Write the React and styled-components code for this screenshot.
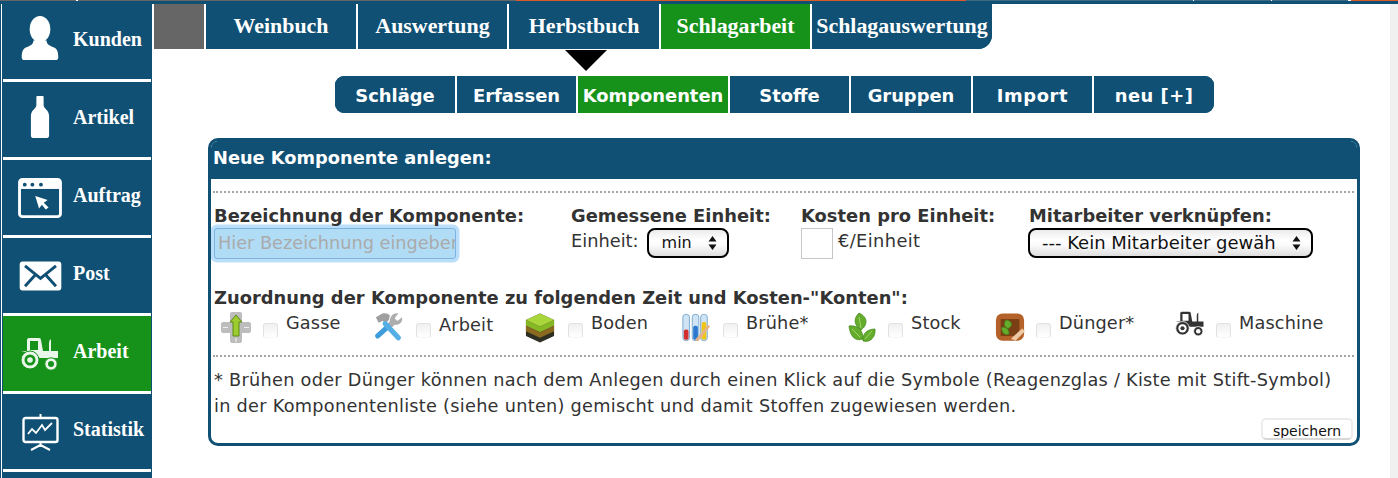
import React from "react";
import styled, { createGlobalStyle } from "styled-components";

const BLUE = "#0f5074";
const GREEN = "#16921a";

const Global = createGlobalStyle`
  html, body { margin: 0; padding: 0; background: #fff; height: 478px; overflow: hidden; }
  #root { height: 478px; }
  * { box-sizing: border-box; }
`;

const Page = styled.div`
  width: 1398px; height: 478px; display: flex; flex-direction: column; overflow: hidden; background: #fff;
`;
const TopStrip = styled.div`
  height: 4px; flex: none; display: flex; background: ${BLUE}; align-items: flex-start;
`;
const StripPart = styled.div`
  height: 1px; width: ${p => p.$w}px; flex: ${p => (p.$grow ? 1 : "none")}; background: ${p => p.$c};
`;
const Body = styled.div`
  flex: 1; display: flex; min-height: 0; border-left: 1px solid ${BLUE}; border-right: 8px solid #f0f0f0;
`;
const Sidebar = styled.nav`
  width: 150px; flex: none; margin-left: 1px; background: ${BLUE};
  display: flex; flex-direction: column; padding: 0 1px; height: 474px; overflow: hidden;
`;
const SideItem = styled.div`
  height: 78px; flex: none; display: flex; align-items: center; background: ${p => (p.$active ? GREEN : "transparent")};
  border-bottom: 3px solid #fff; color: #fff;
  font: bold 20px "Liberation Serif", serif;
`;
const SideIcon = styled.div`
  width: 70px; flex: none; display: flex; justify-content: center; align-items: center; padding-left: 4px;
  transform: translateY(${p => p.$dy || 0}px);
`;
const SideLabel = styled.span`
  transform: translateY(-2px);
`;
const Main = styled.div`
  flex: 1; min-width: 0; display: flex; flex-direction: column;
`;
const TopTabs = styled.div`
  display: flex; height: 45px; align-self: flex-start; margin-left: 2px;
  background: ${BLUE}; border-bottom-right-radius: 14px; overflow: hidden;
`;
const TopTab = styled.div`
  width: ${p => p.$w}px; height: 45px; flex: none; display: flex; align-items: center; justify-content: center;
  background: ${p => (p.$gray ? "#666" : p.$active ? GREEN : BLUE)};
  border-right: ${p => (p.$last ? "0" : "2px solid #fff")};
  color: #fff; font: bold 21.9px "Liberation Serif", serif; white-space: nowrap; padding-bottom: 2px;
`;
const Arrow = styled.div`
  height: 21px; flex: none; padding-left: 413px; padding-top: 1px;
`;
const ArrowShape = styled.div`
  width: 0; height: 0; border-left: 21.5px solid transparent; border-right: 21.5px solid transparent; border-top: 21px solid #000;
`;
const SubTabs = styled.div`
  display: flex; height: 37px; flex: none; margin: 6px 0 0 183px; align-self: flex-start; background: ${BLUE}; border-radius: 9px; overflow: hidden;
`;
const SubTab = styled.div`
  width: ${p => p.$w}px; flex: none; display: flex; align-items: center; justify-content: center;
  background: ${p => (p.$active ? GREEN : BLUE)}; border-right: ${p => (p.$last ? "0" : "2px solid #fff")};
  color: #fff; font: bold 17.9px "DejaVu Sans", sans-serif; letter-spacing: ${p => p.$ls || 0}px; white-space: nowrap; padding-top: 1px;
`;
const Card = styled.section`
  width: 1152px; height: 308px; flex: none; margin: 25px 0 0 56px; border: 3px solid ${BLUE}; border-radius: 10px; overflow: hidden; color: #333;
`;
const CardHead = styled.h2`
  margin: 0; height: 38px; background: ${BLUE}; color: #fff; font: bold 17.8px "DejaVu Sans", sans-serif; padding: 6px 0 0 2px; white-space: nowrap;
`;
const Dots = styled.div`
  border-top: 2px dotted #a5a5a5; margin: ${p => p.$m};
  height: 0;
`;
const FieldRow = styled.div`
  display: flex; height: 86px;
`;
const Field = styled.div`
  width: ${p => p.$w}px; flex: none; padding-left: 3px;
`;
const FieldTitle = styled.div`
  font: bold 17.85px/20px "DejaVu Sans", sans-serif; color: #333; white-space: nowrap; letter-spacing: .03px;
  margin-top: ${p => p.$mt || 0}px;
`;
const NameInput = styled.div`
  width: 242px; height: 31px; background: #b1dcf5; border: 1px solid #7eb2df; color: #aaa; margin-top: 2px;
  box-shadow: 0 0 0 3.5px #bbdffa; border-radius: 3px; font: 17.7px/29px "DejaVu Sans", sans-serif; padding-left: 3px; overflow: hidden; white-space: nowrap;
`;
const UnitLine = styled.div`
  display: flex; align-items: flex-start; margin-top: 2px; font: 17.8px/26px "DejaVu Sans", sans-serif; letter-spacing: ${p => p.$ls || 0}px; color: #333;
`;
const FakeSelect = styled.div`
  position: relative; width: ${p => p.$w}px; height: 30px; border: 2px solid #000; border-radius: 8px; color: #111; margin: ${p => p.$m || 0};
  background: linear-gradient(#ececec, #fff 40%, #fafafa 60%, #dedede); letter-spacing: 0;
  font: ${p => p.$fs}px/25px "DejaVu Sans", sans-serif; padding-left: ${p => p.$pl}px; white-space: nowrap; overflow: hidden;
`;
const Updown = styled.svg`
  position: absolute; right: 10px; top: 6px; width: 9px; height: 14px;
`;
const CostBox = styled.div`
  width: 32px; height: 31px; border: 1px solid #c6c6c6; flex: none; margin-right: 5px; background: #fff;
`;
const Accounts = styled.div`
  display: flex; height: 44px; margin-top: 3px; padding-left: 10px;
`;
const Account = styled.div`
  width: ${p => p.$w}px; flex: none; display: flex; align-items: flex-start; font: 17.7px/24px "DejaVu Sans", sans-serif; letter-spacing: .15px; color: #333;
`;
const AccIcon = styled.svg`
  width: 30px; height: 31px; flex: none; margin-top: 1px;
`;
const Check = styled.div`
  width: 15px; height: 15px; flex: none; margin: 12px 8px 0 ${p => p.$ml}px; border-radius: 3px; border: 1px solid #e2e2e2; border-bottom-color: #f6f6f6;
  background: linear-gradient(#f0f0f0, #fff);
`;
const AccLabel = styled.span`
  margin-top: ${p => p.$mt ?? 0}px;
`;
const Note = styled.p`
  margin: 10px 0 0 3px; font: 17.7px/26px "DejaVu Sans", sans-serif; letter-spacing: .28px; color: #333; white-space: nowrap;
`;
const SaveRow = styled.div`
  display: flex; justify-content: flex-end; margin: -1px 4px 0 0;
`;
const SaveButton = styled.div`
  width: 92px; height: 22px; border: 2px solid #ececec; border-bottom-color: #d8d8d8; border-radius: 5px; background: #fff; color: #111;
  font: 14px/23px "DejaVu Sans", sans-serif; text-align: center; overflow: hidden;
`;

const UserIcon = () => (
  <svg width="38" height="45" viewBox="0 0 40 48" fill="#fff">
    <ellipse cx="20" cy="14" rx="11" ry="14" />
    <path d="M13 26 C13 31 8 32 4 34 C1 36 .5 40 .5 44 C.5 46 1.5 47 3 47 H37 C38.5 47 39.5 46 39.5 44 C39.5 40 39 36 36 34 C32 32 27 31 27 26 Z" />
  </svg>
);
const BottleIcon = () => (
  <svg width="20" height="46" viewBox="0 0 22 48" fill="#fff">
    <path d="M7 2 Q7 1 8 1 H14 Q15 1 15 2 V11 C15 15 21 16 21 23 V45 Q21 47 19 47 H3 Q1 47 1 45 V23 C1 16 7 15 7 11 Z" />
  </svg>
);
const WindowIcon = () => (
  <svg width="44" height="40" viewBox="0 0 46 42">
    <rect x="1.5" y="1.5" width="43" height="39" rx="3" fill="none" stroke="#fff" strokeWidth="3" />
    <rect x="1.5" y="1.5" width="43" height="10" fill="#fff" />
    <circle cx="7" cy="7" r="2" fill={BLUE} /><circle cx="15" cy="7" r="2" fill={BLUE} /><circle cx="24" cy="7" r="2" fill={BLUE} />
    <path d="M18 19 L31 23 L27 26 L32 31 L29 33 L25 28 L22 32 Z" fill="#fff" />
  </svg>
);
const MailIcon = () => (
  <svg width="43" height="30" viewBox="0 0 44 31">
    <rect width="43" height="30" x=".5" y=".5" rx="3" fill="#fff" />
    <path d="M6 5 L22 18 L38 5 M6 26 L17 14 M38 26 L27 14" fill="none" stroke={BLUE} strokeWidth="3" />
  </svg>
);
const Tractor = ({ c = "#e9f6e9", bg = GREEN, w = 40 }) => (
  <svg width={w} height={w * 0.85} viewBox="0 0 40 34">
    <path d="M7 3 Q7 1 9 1 H19 Q21 1 21 3 L23 14 H29 V6 Q29 3 31 2 V14 H38 V21 L33 21 H20 L6 15 L1 14 H7 Z" fill={c} />
    <rect x="10" y="4" width="8" height="9" fill={bg} />
    <circle cx="10" cy="23" r="9" fill={c} stroke={bg} strokeWidth="1" />
    <circle cx="10" cy="23" r="5.5" fill={bg} /><circle cx="10" cy="23" r="2.8" fill={c} />
    <circle cx="31" cy="27" r="6.2" fill={c} stroke={bg} strokeWidth="1" />
    <circle cx="31" cy="27" r="3" fill={bg} />
  </svg>
);
const BoardIcon = () => (
  <svg width="37" height="37" viewBox="0 0 37 37">
    <path d="M18.5 0 V3" stroke="#fff" strokeWidth="2" />
    <rect x="1.5" y="4" width="34" height="24" rx="2" fill="none" stroke="#fff" strokeWidth="2.4" />
    <path d="M6 20 L10 15 L14 19 L20 11 L23 16 L30 9" fill="none" stroke="#fff" strokeWidth="1.8" />
    <path d="M18.5 28 V33 M18.5 31 L9 36 M18.5 31 L28 36" fill="none" stroke="#fff" strokeWidth="2" />
  </svg>
);

const GasseIcon = () => (
  <AccIcon viewBox="0 0 30 31">
    <path d="M9 2 Q9 0 11 0 H19 Q21 0 21 2 V10 H28 Q30 10 30 12 V19 Q30 21 28 21 H21 V29 Q21 31 19 31 H11 Q9 31 9 29 V21 H2 Q0 21 0 19 V12 Q0 10 2 10 H9 Z" fill="#bdbdbd" />
    <path d="M15 3 L21 10 H18 V24 H12 V10 H9 Z" fill="#9ccc2f" stroke="#5d8a16" strokeWidth="1" />
    <path d="M15 26 V30 M2 15.5 H7 M23 15.5 H28" stroke="#efefef" strokeWidth="1.2" />
  </AccIcon>
);
const ToolsIcon = () => (
  <AccIcon viewBox="0 0 32 32">
    <path d="M3 5 L10 1 Q15 0 18 3 L17 8 L14 11 L10 9 L6 11 Z" fill="#9f9f9f" />
    <path d="M27 1 L23 6 L26 9 L31 5 C32 10 28 14 23 13 L19 17 L15 13 L18 9 C18 4 22 0 27 1 Z" fill="#adadad" />
    <path d="M16 15 L5 25" stroke="#3f9ddc" strokeWidth="5.5" strokeLinecap="round" />
    <path d="M13 12 L27 27" stroke="#56aee6" strokeWidth="5.5" strokeLinecap="round" />
  </AccIcon>
);
const SoilIcon = () => (
  <AccIcon viewBox="0 0 32 32">
    <path d="M16 1 L31 8 V25 L16 32 L1 25 V8 Z" fill="#2f2f24" />
    <path d="M1 8 L16 15 L31 8 V14 L16 21 L1 14 Z" fill="#86b826" />
    <path d="M16 1 L31 8 L16 15 L1 8 Z" fill="#a9d63b" />
    <path d="M1 14 L16 21 L31 14 V20 L16 27 L1 20 Z" fill="#8a6a1e" />
  </AccIcon>
);
const TubesIcon = () => (
  <AccIcon viewBox="0 0 32 32">
    <rect x="2" y="2" width="7" height="28" rx="3" fill="#cfe4f5" stroke="#7aa9cc" />
    <rect x="12" y="2" width="7" height="28" rx="3" fill="#cfe4f5" stroke="#7aa9cc" />
    <rect x="21" y="2" width="7" height="28" rx="3" fill="#cfe4f5" stroke="#7aa9cc" />
    <rect x="3" y="18" width="5" height="11" rx="2" fill="#d32f2f" />
    <rect x="13" y="14" width="5" height="15" rx="2" fill="#2a78d0" />
    <rect x="22" y="10" width="5" height="19" rx="2" fill="#f0c419" />
    <path d="M15 29 L29 13 L31 15 L18 31 Z" fill="#e5b486" />
  </AccIcon>
);
const Leaf = ({ d }) => <path d={d} fill="#64ac2c" stroke="#3d8416" strokeWidth=".7" />;
const PlantIcon = () => (
  <AccIcon viewBox="0 0 30 31">
    <Leaf d="M11 1 C20 5 20 13 13 18 C6 13 5 7 11 1 Z" />
    <Leaf d="M1 14 C9 13 15 17 15 27 C7 30 2 24 1 14 Z" />
    <Leaf d="M27 17 C28 25 22 31 15 29 C14 22 19 17 27 17 Z" />
    <path d="M11 5 L13 16 M4 17 L12 25 M24 19 L17 27" stroke="#a4d66c" strokeWidth="1" fill="none" />
  </AccIcon>
);
const CrateIcon = () => (
  <AccIcon viewBox="0 0 32 32">
    <rect x="1" y="1" width="30" height="29" rx="7" fill="#b4622a" />
    <rect x="6" y="7" width="20" height="18" fill="#7a3f14" />
    <Leaf d="M12 8 C19 9 19 15 14 17 C9 15 9 11 12 8 Z" />
    <Leaf d="M7 16 C12 15 15 18 15 23 C10 25 7 21 7 16 Z" />
    <path d="M17 28 L29 17 L32 20 L22 30 Z" fill="#edc9a3" />
  </AccIcon>
);

const side = [
  ["Kunden", <UserIcon />, -3],
  ["Artikel", <BottleIcon />, -3],
  ["Auftrag", <WindowIcon />, 0],
  ["Post", <MailIcon />, 0],
  ["Arbeit", <Tractor />, 0, true],
  ["Statistik", <BoardIcon />, 1],
];
const top = [
  ["", 52, { $gray: true }],
  ["Weinbuch", 152],
  ["Auswertung", 151],
  ["Herbstbuch", 152],
  ["Schlagarbeit", 151, { $active: true }],
  ["Schlagauswertung", 180, { $last: true }],
];
const sub = [
  ["Schläge", 122],
  ["Erfassen", 121],
  ["Komponenten", 152, { $active: true }],
  ["Stoffe", 121],
  ["Gruppen", 122],
  ["Import", 121, { $ls: 0.6 }],
  ["neu [+]", 120, { $last: true, $ls: 0.5 }],
];
const strip = [[76, "#666"], [2, "#fff"], [438, "#666"], [450, "#dc5a26"], [227, "#3c6a82"], [1, "#fff"], [77, "#3c6a82"], [1, "#fff"], [76, "#3c6a82"], [3, "#fff"]];
const arrows = <Updown viewBox="0 0 8 14"><path d="M4 0 L8 5.5 H0 Z M4 14 L8 8.5 H0 Z" fill="#111" /></Updown>;

export default function App() {
  return (
    <Page>
      <Global />
      <TopStrip>
        {strip.map(([w, c], i) => <StripPart key={i} $w={w} $c={c} />)}
        <StripPart $grow $c="#dc5a26" />
      </TopStrip>
      <Body>
        <Sidebar>
          {side.map(([label, icon, dy, active]) => (
            <SideItem key={label} $active={active}>
              <SideIcon $dy={dy}>{icon}</SideIcon>
              <SideLabel>{label}</SideLabel>
            </SideItem>
          ))}
        </Sidebar>
        <Main>
          <TopTabs>
            {top.map(([label, w, props]) => (
              <TopTab key={label || "blank"} $w={w} {...props}>{label}</TopTab>
            ))}
          </TopTabs>
          <Arrow><ArrowShape /></Arrow>
          <SubTabs>
            {sub.map(([label, w, props]) => (
              <SubTab key={label} $w={w} {...props}>{label}</SubTab>
            ))}
          </SubTabs>
          <Card>
            <CardHead>Neue Komponente anlegen:</CardHead>
            <Dots $m="12px 3px 0 2px" />
            <FieldRow>
              <Field $w={357}>
                <FieldTitle $mt={13}>Bezeichnung der Komponente:</FieldTitle>
                <NameInput>Hier Bezeichnung eingeben</NameInput>
              </Field>
              <Field $w={230}>
                <FieldTitle $mt={13}>Gemessene Einheit:</FieldTitle>
                <UnitLine>Einheit:<FakeSelect $w={82} $fs={16} $pl={13} $m="0 0 0 8px">min{arrows}</FakeSelect></UnitLine>
              </Field>
              <Field $w={228}>
                <FieldTitle $mt={13}>Kosten pro Einheit:</FieldTitle>
                <UnitLine $ls={0.4}><CostBox />€/Einheit</UnitLine>
              </Field>
              <Field $w={320}>
                <FieldTitle $mt={13}>Mitarbeiter verknüpfen:</FieldTitle>
                <FakeSelect $w={285} $fs={18} $pl={12} $m="2px 0 0 -1px">--- Kein Mitarbeiter gewäh{arrows}</FakeSelect>
              </Field>
            </FieldRow>
            <Field $w={1000}>
              <FieldTitle $mt={9}>Zuordnung der Komponente zu folgenden Zeit und Kosten-"Konten":</FieldTitle>
            </Field>
            <Accounts>
              <Account $w={152}><GasseIcon /><Check $ml={12} /><AccLabel>Gasse</AccLabel></Account>
              <Account $w={152}><ToolsIcon /><Check $ml={13} /><AccLabel $mt={2}>Arbeit</AccLabel></Account>
              <Account $w={156}><SoilIcon /><Check $ml={13} /><AccLabel>Boden</AccLabel></Account>
              <Account $w={167}><TubesIcon /><Check $ml={12} /><AccLabel>Brühe*</AccLabel></Account>
              <Account $w={147}><PlantIcon /><Check $ml={10} /><AccLabel>Stock</AccLabel></Account>
              <Account $w={180}><CrateIcon /><Check $ml={11} /><AccLabel>Dünger*</AccLabel></Account>
              <Account $w={180}><Tractor c="#333" bg="#fff" w={30} /><Check $ml={11} /><AccLabel>Maschine</AccLabel></Account>
            </Accounts>
            <Dots $m="0 3px 0 2px" />
            <Note>* Brühen oder Dünger können nach dem Anlegen durch einen Klick auf die Symbole (Reagenzglas / Kiste mit Stift-Symbol)<br />in der Komponentenliste (siehe unten) gemischt und damit Stoffen zugewiesen werden.</Note>
            <SaveRow><SaveButton>speichern</SaveButton></SaveRow>
          </Card>
        </Main>
      </Body>
    </Page>
  );
}
